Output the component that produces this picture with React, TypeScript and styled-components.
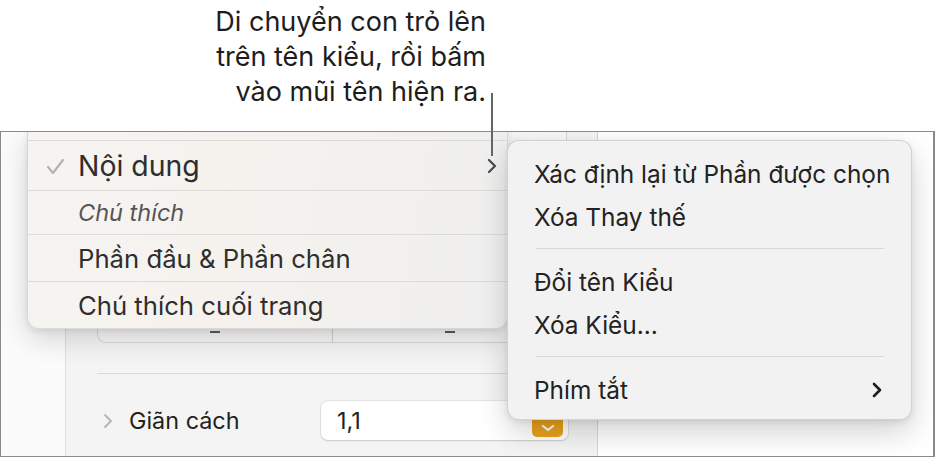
// Style menu callout

// ___________________________________________________________________

import * as React from 'react'
import styled, { createGlobalStyle } from 'styled-components'

// ___________________________________________________________________

const GlobalStyle = createGlobalStyle`
  html, body {
    margin: 0;
    padding: 0;
    background: #ffffff;
  }
  body {
    font-family: Inter, "Noto Sans", "DejaVu Sans", sans-serif;
    -webkit-font-smoothing: antialiased;
  }
`

const Page = styled.div`
  position: relative;
  width: 935px;
  height: 457px;
  overflow: hidden;
  background: #ffffff;
`

const Caption = styled.div`
  width: 486px;
  height: 131px;
  padding-top: 4px;
  box-sizing: border-box;
  text-align: right;
  font-size: 27px;
  line-height: 35px;
  color: #1d1d1d;
  white-space: nowrap;
`

const Leader = styled.div`
  position: absolute;
  left: 491px;
  top: 93px;
  width: 2px;
  height: 63px;
  background: #666666;
  z-index: 5;
`

const Frame = styled.div`
  position: relative;
  height: 326px;
  border: 1px solid #8a8a8a;
  border-right-width: 2px;
  box-sizing: border-box;
  overflow: hidden;
  display: flex;
  background: #ffffff;
`

const Gutter = styled.div`
  width: 64px;
  flex: none;
  background: #fbfbfb;
`

const Panel = styled.div`
  width: 533px;
  flex: none;
  background: #f4f4f4;
  border-left: 1px solid #dedede;
  border-right: 1px solid #d6d6d6;
  padding: 0 0 0 31px;
  box-sizing: border-box;
`

const Box = styled.div`
  width: 470px;
  height: 211px;
  border: 1px solid #d6d6d6;
  border-top: none;
  border-radius: 0 0 9px 9px;
  background: #f7f7f7;
  box-sizing: border-box;
  display: grid;
  grid-template-columns: 1fr 1fr;
`

const Cell = styled.div<{ $divider?: boolean }>`
  display: flex;
  align-items: flex-end;
  justify-content: center;
  padding-bottom: 9px;
  border-left: ${(p) => (p.$divider ? '1px solid #d0d0d0' : 'none')};
`

const Dash = styled.span`
  width: 10px;
  height: 2px;
  background: #5a5a5a;
`

const Rule = styled.div`
  width: 470px;
  height: 1px;
  background: #d9d9d9;
  margin-top: 30px;
`

const SpacingRow = styled.div`
  display: grid;
  grid-template-columns: 224px 247px;
  align-items: center;
  margin-top: 27px;
`

const Label = styled.div`
  display: flex;
  align-items: center;
  gap: 15px;
  padding-left: 5px;
  font-size: 23.4px;
  color: #222222;
`

const Field = styled.div`
  height: 39px;
  border-radius: 7px;
  background: #ffffff;
  box-shadow: 0 0 0 1px rgba(0, 0, 0, 0.06), 0 1px 2px rgba(0, 0, 0, 0.12);
  display: flex;
  align-items: center;
  justify-content: space-between;
  padding: 0 5px 0 16px;
  font-size: 23.4px;
  color: #222222;
`

const Stepper = styled.div`
  width: 31px;
  height: 26px;
  margin-top: 6px;
  border-radius: 5px;
  background: #e8a21c;
  display: flex;
  align-items: flex-end;
  justify-content: center;
  padding-bottom: 5px;
  box-sizing: border-box;
`

const StyleMenu = styled.div`
  position: absolute;
  left: 26px;
  top: 0;
  width: 481px;
  background: linear-gradient(100deg, #f6f4f1 0%, #f5f2ee 45%, #efefef 100%);
  border: 1px solid rgba(0, 0, 0, 0.1);
  border-top: none;
  border-radius: 0 0 12px 12px;
  box-shadow: 0 10px 28px rgba(0, 0, 0, 0.16), 0 2px 6px rgba(0, 0, 0, 0.08);
  box-sizing: border-box;
  z-index: 2;
`

const MenuRow = styled.div<{ $h: number; $size: number; $italic?: boolean; $last?: boolean }>`
  height: ${(p) => p.$h}px;
  display: flex;
  align-items: center;
  padding: 0 9px 0 50px;
  position: relative;
  white-space: nowrap;
  border-bottom: ${(p) => (p.$last ? 'none' : '1px solid #dddbd8')};
  font-size: ${(p) => p.$size}px;
  font-style: ${(p) => (p.$italic ? 'italic' : 'normal')};
  color: ${(p) => (p.$italic ? '#555555' : '#2e2e2e')};
`

const Check = styled.svg`
  position: absolute;
  left: 18px;
  top: 17px;
`

const RowArrow = styled.svg`
  margin-left: auto;
`

const SubMenu = styled.div`
  position: absolute;
  left: 506px;
  top: 8px;
  width: 405px;
  height: 280px;
  padding: 11px 0 10px;
  box-sizing: border-box;
  background: #f2f2f2;
  border: 1px solid rgba(0, 0, 0, 0.13);
  border-radius: 12px;
  box-shadow: 0 12px 30px rgba(0, 0, 0, 0.18), 0 2px 6px rgba(0, 0, 0, 0.08);
  z-index: 3;
`

const SubItem = styled.div`
  height: 43px;
  display: flex;
  align-items: center;
  padding: 0 28px 0 26px;
  white-space: nowrap;
  font-size: 24.4px;
  color: #222222;
`

const SubSeparator = styled.div`
  height: 1px;
  margin: 10px 27px 11px 28px;
  background: #d8d8d8;
`

// ___________________________________________________________________

const Chevron = ({ color, width }: { color: string; width: number }) => (
  <svg width="12" height="18" viewBox="0 0 12 18">
    <polyline
      points="3,3 9,9 3,15"
      fill="none"
      stroke={color}
      strokeWidth={width}
      strokeLinecap="round"
      strokeLinejoin="round"
    />
  </svg>
)

const App = () => (
  <Page>
    <GlobalStyle />
    <Caption>
      Di chuyển con trỏ lên
      <br />
      trên tên kiểu, rồi bấm
      <br />
      vào mũi tên hiện ra.
    </Caption>
    <Leader />

    <Frame>
      <Gutter />
      <Panel>
        <Box>
          <Cell>
            <Dash />
          </Cell>
          <Cell $divider>
            <Dash />
          </Cell>
        </Box>
        <Rule />
        <SpacingRow>
          <Label>
            <Chevron color="#b4b4b4" width={1.8} />
            Giãn cách
          </Label>
          <Field>
            1,1
            <Stepper>
              <svg width="14" height="8" viewBox="0 0 14 8">
                <polyline
                  points="2,2 7,6 12,2"
                  fill="none"
                  stroke="#ffffff"
                  strokeWidth="2.2"
                  strokeLinecap="round"
                  strokeLinejoin="round"
                />
              </svg>
            </Stepper>
          </Field>
        </SpacingRow>
      </Panel>

      <StyleMenu>
        <MenuRow $h={8} $size={22} />
        <MenuRow $h={49} $size={28.4}>
          <Check width="19" height="17" viewBox="0 0 19 17">
            <polyline
              points="2,9 7,15 17,2"
              fill="none"
              stroke="#b3b3b3"
              strokeWidth="2.2"
              strokeLinecap="round"
              strokeLinejoin="round"
            />
          </Check>
          Nội dung
          <RowArrow width="12" height="18" viewBox="0 0 12 18">
            <polyline
              points="3,3 9,9 3,15"
              fill="none"
              stroke="#4a4a4a"
              strokeWidth="2.2"
              strokeLinecap="round"
              strokeLinejoin="round"
            />
          </RowArrow>
        </MenuRow>
        <MenuRow $h={43} $size={23.5} $italic>
          Chú thích
        </MenuRow>
        <MenuRow $h={46} $size={25.7}>
          Phần đầu &amp; Phần chân
        </MenuRow>
        <MenuRow $h={46} $size={25.7} $last>
          Chú thích cuối trang
        </MenuRow>
      </StyleMenu>

      <SubMenu>
        <SubItem>Xác định lại từ Phần được chọn</SubItem>
        <SubItem>Xóa Thay thế</SubItem>
        <SubSeparator />
        <SubItem>Đổi tên Kiểu</SubItem>
        <SubItem>Xóa Kiểu...</SubItem>
        <SubSeparator />
        <SubItem>
          Phím tắt
          <RowArrow width="12" height="18" viewBox="0 0 12 18">
            <polyline
              points="3,3 9,9 3,15"
              fill="none"
              stroke="#1e1e1e"
              strokeWidth="2.6"
              strokeLinecap="round"
              strokeLinejoin="round"
            />
          </RowArrow>
        </SubItem>
      </SubMenu>
    </Frame>
  </Page>
)

export default App
